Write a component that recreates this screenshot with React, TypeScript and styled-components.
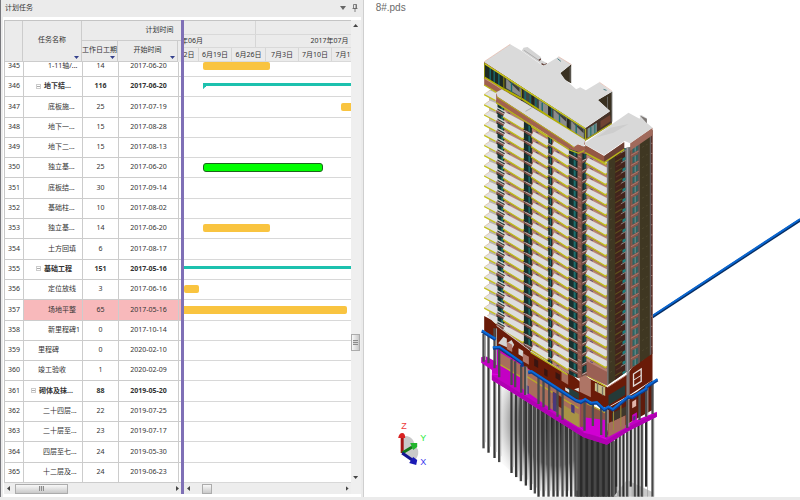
import React from "react";
import styled, { createGlobalStyle, css } from "styled-components";

const GlobalStyle = createGlobalStyle`
  * { box-sizing: border-box; }
  html, body, #root { height: 100%; margin: 0; }
  body { background: #ffffff; overflow: hidden; }
  button { font: inherit; padding: 0; margin: 0; border: 0; background: none; color: inherit; }
`;

/* ---------- data ---------- */

type Task = {
  id: number;
  name: string;
  indent: number;
  days: number;
  start: string;
  group?: boolean;
  active?: boolean;
  bar?: { kind: "task" | "summary" | "done"; from: number; length: number; open?: boolean };
};

const tasks: Task[] = [
  { id: 345, name: "1-11轴/...", indent: 24, days: 14, start: "2017-06-20", bar: { kind: "task", from: 19, length: 67 } },
  { id: 346, name: "地下结...", indent: 12, days: 116, start: "2017-06-20", group: true, bar: { kind: "summary", from: 19, length: 560, open: true } },
  { id: 347, name: "底板施...", indent: 24, days: 25, start: "2017-07-19", bar: { kind: "task", from: 157, length: 120 } },
  { id: 348, name: "地下一...", indent: 24, days: 15, start: "2017-08-28" },
  { id: 349, name: "地下二...", indent: 24, days: 15, start: "2017-08-13" },
  { id: 350, name: "独立基...", indent: 24, days: 25, start: "2017-06-20", bar: { kind: "done", from: 19, length: 120 } },
  { id: 351, name: "底板结...", indent: 24, days: 30, start: "2017-09-14" },
  { id: 352, name: "基础柱...", indent: 24, days: 10, start: "2017-08-02" },
  { id: 353, name: "独立基...", indent: 24, days: 14, start: "2017-06-20", bar: { kind: "task", from: 19, length: 67 } },
  { id: 354, name: "土方回填", indent: 24, days: 6, start: "2017-08-17" },
  { id: 355, name: "基础工程", indent: 12, days: 151, start: "2017-05-16", group: true, bar: { kind: "summary", from: -140, length: 720 } },
  { id: 356, name: "定位放线", indent: 24, days: 3, start: "2017-06-16", bar: { kind: "task", from: 0, length: 15 } },
  { id: 357, name: "场地平整", indent: 24, days: 65, start: "2017-05-16", active: true, bar: { kind: "task", from: -148, length: 311 } },
  { id: 358, name: "新里程碑1", indent: 24, days: 0, start: "2017-10-14" },
  { id: 359, name: "里程碑", indent: 14, days: 0, start: "2020-02-10" },
  { id: 360, name: "竣工验收", indent: 14, days: 1, start: "2020-02-09" },
  { id: 361, name: "砌体及抹...", indent: 7, days: 88, start: "2019-05-20", group: true },
  { id: 362, name: "二十四层...", indent: 19, days: 22, start: "2019-07-25" },
  { id: 363, name: "二十层至...", indent: 19, days: 23, start: "2019-07-17" },
  { id: 364, name: "四层至七...", indent: 19, days: 24, start: "2019-05-30" },
  { id: 365, name: "十二层及...", indent: 19, days: 24, start: "2019-06-23" },
];

const weeks = ["6月12日", "6月19日", "6月26日", "7月3日", "7月10日", "7月17日"];

/* ---------- shell ---------- */

const Page = styled.div`
  height: 100vh;
  display: grid;
  grid-template-columns: minmax(0, 5fr) minmax(0, 6fr);
  grid-template-rows: minmax(0, 1fr) 3px;
  font-family: "Noto Sans", "Noto Sans CJK SC", sans-serif;
  font-size: 7px;
  line-height: 10px;
  color: #333333;
`;

const StatusStrip = styled.footer`
  grid-column: 1 / -1;
  background: #ebebeb;
`;

const TaskPanel = styled.section`
  display: flex;
  flex-direction: column;
  min-height: 0;
  border-left: 1px solid #77777c;
  border-right: 1px solid #cfcfcf;
  background: #ebebeb;
`;

const TitleBar = styled.header`
  display: flex;
  align-items: center;
  gap: 6px;
  height: 17px;
  padding: 0 5px 2px 4px;
`;

const PanelTitle = styled.h1`
  flex: 1;
  margin: 0;
  font-size: 7px;
  font-weight: 400;
`;

const IconButton = styled.button`
  display: flex;
  width: 6px;
  height: 8px;
  align-items: center;
  justify-content: center;
  color: #666666;
`;

const PanelBody = styled.div`
  flex: 1;
  min-height: 0;
  display: flex;
  margin: 0 2px;
  padding: 3px 0 3px 1px;
  background: #ffffff;
`;

const Pane = styled.div<{ $grow?: boolean }>`
  display: flex;
  flex-direction: column;
  min-height: 0;
  min-width: 0;
  overflow: hidden;
  ${(p) => (p.$grow ? css`flex: 1;` : css`flex: none; width: 177px;`)}
`;

const Splitter = styled.div`
  flex: none;
  width: 3px;
  background: #7f70b6;
`;

/* ---------- task table ---------- */

const columns = "19px 59px 36px 60px 3px";
const rowTracks = `15px repeat(${tasks.length - 1}, minmax(0, 1fr))`;

const Table = styled.table`
  flex: 1;
  min-height: 0;
  display: flex;
  flex-direction: column;
`;

const Head = styled.thead`
  display: block;
  height: 42px;
  flex: none;
  border-top: 1px solid #c4c4c4;
  border-left: 1px solid #c4c4c4;
  background: #ebebeb;
`;

const HeadRow = styled.tr`
  display: grid;
  height: 41px;
  grid-template-columns: 18px 59px 36px 60px 60px;
  grid-template-rows: 20px 21px;
`;

const HeadCell = styled.th<{ $area: string }>`
  grid-area: ${(p) => p.$area};
  display: flex;
  align-items: center;
  justify-content: center;
  position: relative;
  padding: 0 0 2px;
  border-right: 1px solid #cccccc;
  border-bottom: 1px solid #cccccc;
  font-weight: 400;
  white-space: nowrap;
`;

const FilterMark = styled.button`
  position: absolute;
  right: 2px;
  bottom: 2px;
  width: 5px;
  height: 3px;
  background: #34418c;
  clip-path: polygon(0 0, 100% 0, 50% 100%);
`;

const Body = styled.tbody`
  flex: 1;
  min-height: 0;
  display: grid;
  grid-template-rows: ${rowTracks};
`;

const Row = styled.tr<{ $group?: boolean }>`
  display: grid;
  grid-template-columns: ${columns};
  grid-template-rows: minmax(0, 1fr);
  min-height: 0;
  overflow: hidden;
  border-left: 1px solid #c8c8c8;
  border-bottom: 1px solid #cccccc;
  font-weight: ${(p) => (p.$group ? 700 : 400)};
  align-items: end;
`;

const Cell = styled.td<{ $active?: boolean; $left?: number }>`
  display: flex;
  align-items: center;
  justify-content: ${(p) => (p.$left === undefined ? "center" : "flex-start")};
  padding: 0 0 0 ${(p) => p.$left ?? 0}px;
  height: 100%;
  min-height: 20px;
  min-width: 0;
  white-space: nowrap;
  border-right: 1px solid #cccccc;
  background: ${(p) => (p.$active ? "#f8b9bb" : "#ffffff")};
`;

const NumberCell = styled(Cell).attrs({ as: "th" })`
  font-weight: 400;
`;

const Toggle = styled.button`
  flex: none;
  width: 5px;
  height: 5px;
  margin-right: 3px;
  border: 1px solid #cccccc;
  background: linear-gradient(#aaaaaa, #aaaaaa) center / 3px 1px no-repeat #ffffff;
`;

/* ---------- chart ---------- */

const ChartHead = styled.div`
  flex: none;
  height: 42px;
  display: grid;
  grid-template-rows: 14px 13px 14px;
  border-top: 1px solid #c4c4c4;
  background: #ebebeb;
  overflow: hidden;
`;

const Tier = styled.div<{ $tracks: string; $shift: number }>`
  display: grid;
  grid-template-columns: ${(p) => p.$tracks};
  margin-left: ${(p) => p.$shift}px;
  border-bottom: 1px solid #d9d9d9;
`;

const TierCell = styled.div`
  display: flex;
  align-items: center;
  justify-content: center;
  white-space: nowrap;
  border-right: 1px solid #d6d6d6;
`;

const ChartBody = styled.div`
  flex: 1;
  min-height: 0;
  display: grid;
  grid-template-rows: ${rowTracks};
`;

const Lane = styled.div`
  display: flex;
  align-items: flex-end;
  min-height: 0;
  overflow: hidden;
  border-bottom: 1px solid #d8d8d8;
`;

const Track = styled.div`
  display: flex;
  align-items: center;
  height: 100%;
  min-height: 20px;
`;

const Bar = styled.div<{ $kind: "task" | "summary" | "done"; $from: number; $length: number }>`
  flex: none;
  margin-left: ${(p) => p.$from}px;
  width: ${(p) => p.$length}px;
  ${(p) =>
    p.$kind === "summary"
      ? css`height: 3px; margin-bottom: 3px; background: #1dc1ae;`
      : p.$kind === "done"
      ? css`height: 9px; border: 1px solid #1c651c; border-radius: 3px; background: #00ff00;`
      : css`height: 8px; border-radius: 2px; background: #f9c440;`}
`;

const StartNotch = styled.div`
  width: 3px;
  height: 6px;
  background: #1dc1ae;
  clip-path: polygon(0 0, 100% 0, 100% 50%, 0 100%);
`;

/* ---------- scroll bars ---------- */

const ScrollRow = styled.div`
  flex: none;
  display: flex;
  align-items: center;
  height: 11px;
  padding: 0 2px 0 3px;
  background: #ededed;
`;

const ScrollColumn = styled.div`
  flex: none;
  display: flex;
  flex-direction: column;
  align-items: center;
  width: 10px;
  padding: 4px 0 15px;
  background: #efefef;
`;

const Space = styled.div<{ $grow: number }>`
  flex: ${(p) => p.$grow} 1 0;
`;

const Thumb = styled.div<{ $w: number; $h: number; $vertical?: boolean }>`
  flex: none;
  display: flex;
  align-items: center;
  justify-content: center;
  width: ${(p) => p.$w}px;
  height: ${(p) => p.$h}px;
  border: 1px solid #acacac;
  background: linear-gradient(${(p) => (p.$vertical ? "90deg" : "180deg")}, #f8f8f8, #c9c9c9);
`;

const Grip = styled.span<{ $vertical?: boolean }>`
  width: 5px;
  height: 5px;
  background: repeating-linear-gradient(
    ${(p) => (p.$vertical ? "180deg" : "90deg")}, #8c8c8c 0 1px, #d5d5d5 1px 2px);
`;

const arrows = {
  left: "polygon(100% 0, 100% 100%, 0 50%)",
  right: "polygon(0 0, 100% 50%, 0 100%)",
  up: "polygon(0 100%, 50% 0, 100% 100%)",
  down: "polygon(0 0, 100% 0, 50% 100%)",
};

const Arrow = styled.button<{ $dir: keyof typeof arrows }>`
  flex: none;
  width: ${(p) => (p.$dir === "left" || p.$dir === "right" ? 3 : 5)}px;
  height: ${(p) => (p.$dir === "left" || p.$dir === "right" ? 5 : 3)}px;
  background: #444444;
  clip-path: ${(p) => arrows[p.$dir]};
`;

/* ---------- model view ---------- */

const ModelPanel = styled.section`
  display: flex;
  flex-direction: column;
  min-width: 0;
  min-height: 0;
  background: #ffffff;
`;

const FileName = styled.h2`
  flex: none;
  height: 16px;
  margin: 0;
  padding: 0 12px;
  font: 400 10px/15px "Liberation Sans", sans-serif;
  color: #6a6a6a;
`;

const Scene = styled.svg`
  flex: 1;
  min-height: 0;
  width: 100%;
  display: block;
`;

const PITCH = 30.5;
const floors = Array.from({ length: 32 }, (_, i) => i - 13);

type Bay = { x: number; w: number; y: number; slope: number };
const bays: Bay[] = [
  { x: 98, w: 63, y: 480, slope: 0.52 },
  { x: 183, w: 51, y: 472, slope: 0.54 },
  { x: 245, w: 51, y: 470, slope: 0.54 },
  { x: 346, w: 64, y: 464, slope: 0.5 },
];

function Slab({ x, w, y, slope }: Bay) {
  const top = y - w * slope;
  return (
    <g>
      <path d={`M${x + 3} ${top + 3}L${x + w} ${y + 3}v9L${x + 3} ${top + 12}z`} fill="#b98377" />
      <path d={`M${x + 14} ${top + 12}l8 4v3l-8 -4z`} fill="#544a76" />
      <path d={`M${x} ${top - 4}L${x + 7} ${top - 18}L${x + w} ${y - 21}V${y - 3}L${x + w - 4} ${y}z`} fill="#dedede" />
      <path d={`M${x} ${top - 3}L${x + w - 4} ${y}L${x + w} ${y - 4}`} fill="none" stroke="#c2be20" strokeWidth="4" />
      <path d={`M${x + 2} ${top + 1}L${x + w - 4} ${y + 4}`} stroke="#8a841f" strokeWidth="1" />
    </g>
  );
}

function WindowStrip({ x, w, y, dir = 1 }: { x: number; w: number; y: number; dir?: number }) {
  const d = w * 0.55 * dir;
  return (
    <g>
      <path d={`M${x} ${y}l${w} ${d}v21l${-w} ${-d}z`} fill="#16302f" />
      <path d={`M${x + w * 0.55} ${y + d * 0.55 + 2}l${w * 0.22} ${d * 0.22}v17l${-w * 0.22} ${-d * 0.22}z`} fill="#1f6d6c" />
      <path d={`M${x} ${y + 24}l${w} ${d}`} stroke="#b2b2b2" strokeWidth="3" />
      <path d={`M${x} ${y + 28}l${w} ${d}`} stroke="#7a4a40" strokeWidth="4" />
    </g>
  );
}

function Tower() {
  return (
    <g>
      <clipPath id="front">
        <path d="M38 180L60 178L78 190V198L300 350H345L400 392L413 388V1068L345 1035L325 1045L290 1030L180 960L80 885L38 845z" />
      </clipPath>
      <clipPath id="side">
        <path d="M410 392L462 355L480 352L548 300V970L412 1066z" />
      </clipPath>

      <g clipPath="url(#front)">
        <path d="M58 180H413V1070H58z" fill="#9a6054" />
        <path d="M160 250h8v800h-8zM230 280h6v800h-6z" fill="#30211d" />
        <path d="M58 180h20v700h-20z" fill="#b9b5b0" />
        {floors.map((k) => (
          <g key={k} transform={`translate(0 ${k * PITCH})`}>
            <WindowStrip x={80} w={24} y={430} />
            <WindowStrip x={162} w={23} y={460} />
            <WindowStrip x={231} w={15} y={468} />
            <WindowStrip x={295} w={28} y={470} />
            <path d="M322 486l14 7v24l-14 -7z" fill="#8b5549" />
            <path d="M324 500l10 5" stroke="#b08378" strokeWidth="3" />
            <WindowStrip x={336} w={13} y={492} dir={-1} />
          </g>
        ))}
        <path d="M107 200v690M190 260v720M250 290v760" stroke="#b98778" strokeWidth="2" />
        <path d="M335 350v700" stroke="#5c4540" strokeWidth="2" />
        {floors.map((k) => (
          <g key={k}>
            {bays.map((b) => (
              <Slab key={b.x} {...b} y={b.y + k * PITCH} />
            ))}
            <g transform={`translate(0 ${k * PITCH})`}>
              <path d="M42 438L58 425L82 435V452L76 456z" fill="#e2e2e2" />
              <path d="M42 437L46 434L58 426" fill="none" stroke="#d9b98e" strokeWidth="2" />
              <path d="M42 438L76 456" stroke="#c4c022" strokeWidth="4" />
              <path d="M80 446l26 14" stroke="#d0d0d0" strokeWidth="4" />
            </g>
          </g>
        ))}
      </g>

      <g clipPath="url(#side)">
        <path d="M410 290H548V1070H410z" fill="#3f3722" />
        <path d="M410 290h5v780h-5z" fill="#7c7c80" />
        <path d="M435 300h30v760h-30z" fill="#42241c" />
        <path d="M465 290h14v760h-14z" fill="#77777b" />
        <path d="M470 290h3v760h-3z" fill="#a9a9ae" />
        <path d="M480 290h29v760h-29z" fill="#86564a" />
        <path d="M504 290h4v760h-4z" fill="#55575a" />
        <path d="M539 290h3v760h-3z" fill="#6d6d70" />
        <path d="M542 290h6v760h-6z" fill="#5a342e" />
        <path d="M547 290v760" stroke="#c08f86" strokeWidth="2" />
        {floors.map((k) => (
          <g key={k} transform={`translate(0 ${k * PITCH})`}>
            <path d="M435 486l20 -12v4l-20 12z" fill="#5e501c" />
            <path d="M457 477l9 -5v9l-9 5z" fill="#1d7f7e" />
            <path d="M452 491l14 -8" stroke="#b4b4b4" strokeWidth="2" />
            <path d="M437 500l16 -9v4l-16 9z" fill="#5a3527" />
            <path d="M487 473l16 -9v19l-16 9z" fill="#2d6463" />
            <path d="M495 468v19" stroke="#9ba7a7" strokeWidth="2" />
            <path d="M482 498l24 -13" stroke="#bd8a7e" strokeWidth="2" />
            <path d="M420 478l5 -3M516 474l5 -3M528 467l4 -2" stroke="#756d4d" strokeWidth="1" />
            <path d="M543 462h4" stroke="#c9a49d" strokeWidth="2" />
          </g>
        ))}
      </g>
    </g>
  );
}

function Roof() {
  return (
    <g>
      <path d="M42 95V165L78 187L345 345V295z" fill="#a0614f" />
      <path d="M42 98L345 292V330L42 143z" fill="#3f4643" />
      <path d="M42 100L98 136V178L42 143z" fill="#1d2a24" />
      <path d="M108 147l46 30v25l-46 -28zM206 210l28 18v32l-28 -18zM250 240l40 26v28l-40 -24zM303 274l38 24v28l-38 -24z" fill="#8b8c8d" />
      <path d="M112 150l36 24v12zM254 243l34 22v10zM306 277l34 21v12z" fill="#3c3b39" />
      <path d="M60 114v38M72 122v38M86 132v37M124 158v34M165 184v34M180 194v34M197 206v34M216 218v34M243 234v34M268 254v30M318 284v30" stroke="#176c70" strokeWidth="4" />
      <path d="M102 140v42M156 176v36M188 196v36M238 228v38M294 268v34" stroke="#25251f" strokeWidth="8" />
      <path d="M42 100L345 296" stroke="#c8c51e" strokeWidth="5" />
      <path d="M42 142L98 176L156 207L345 331" fill="none" stroke="#b4b000" strokeWidth="6" />
      <path d="M43 98v45M101 140v38M154 178v32" stroke="#8c8b14" strokeWidth="3" />
      <path d="M44 146L78 167L92 177" fill="none" stroke="#c79182" strokeWidth="3" />
      <path d="M42 165L80 188" stroke="#b9b51a" strokeWidth="4" />

      <path d="M345 295L425 240V281L345 332z" fill="#473329" />
      <path d="M352 296l28 -18v28l-28 18z" fill="#789090" />
      <path d="M362 291v27M374 283v27" stroke="#1b6b6c" strokeWidth="3" />
      <path d="M391 273l30 -19v20l-30 20z" fill="#704232" />
      <path d="M346 296v34L425 281" fill="none" stroke="#aaa61b" strokeWidth="4" />
      <path d="M303 103V160L284 150L270 130zM425 185V280L418 243L383 210z" fill="#393021" />
      <path d="M300 110v45M412 200v37M425 185v90" stroke="#696764" strokeWidth="3" />
      <path d="M160 53L172 51L212 81V90L229 98L218 106L155 62z" fill="#d4d4d4" />
      <path d="M162 61L206 91L213 84" fill="none" stroke="#999999" strokeWidth="2" />
      <path d="M206 91l6 -4M214 101l8 5l8 -5" stroke="#603d35" strokeWidth="4" fill="none" />
      <path d="M42 95L120 43L155 63L218 107L228 103L265 80L303 103L270 128L284 148L318 178L330 172L347 181L387 157L425 185L383 210L420 243L345 293z" fill="#dadada" />
      <path d="M265 80L304 104M388 157L425 183M42 95L120 43" stroke="#e4b5a6" strokeWidth="2" />
      <path d="M262 86l10 8M400 178l9 3" stroke="#467b83" strokeWidth="3" />

      <path d="M78 190L300 335L345 350V372L300 358L78 218z" fill="#a1614f" />
      <path d="M78 187L95 178L170 222L345 330L340 350L325 342L310 352L296 340L82 200z" fill="#dadada" />
      <path d="M80 201L296 341L312 352" fill="none" stroke="#b5b11b" strokeWidth="3" />
      <path d="M78 218L298 360L325 370L342 362" fill="none" stroke="#b5b11b" strokeWidth="4" />
      <path d="M166 244L184 234" stroke="#9a9a9a" strokeWidth="2" />

      <path d="M345 345L402 378L462 337V358L402 398L345 368z" fill="#945845" />
      <path d="M402 378L462 337V358L402 398z" fill="#6c4034" />
      <path d="M480 340L547 293V316L480 362z" fill="#a06a5c" />
      <path d="M345 338L475 248L508 266L513 254L530 265V279L547 293L480 340L463 333L402 376L345 344z" fill="#d8d8d8" />
      <path d="M380 322L420 293L475 282L430 308z" fill="#cdcdcd" />
      <path d="M508 256l22 10v14z" fill="#7c7774" />
      <path d="M402 398L462 358" stroke="#b9b51a" strokeWidth="4" />
      <path d="M345 368L402 398" stroke="#b9b51a" strokeWidth="4" />
    </g>
  );
}

const frontPiles = [40, 55, 73, 87, 124, 138, 152, 167, 182, 194, 205, 220, 235, 250, 262, 277, 290, 303, 316];
const rearPiles = [325, 333, 341, 350, 358, 366, 375, 383, 391, 400, 408, 417, 428, 438, 449, 460, 471, 482, 494, 505, 515, 528, 547];

function Foundation() {
  return (
    <g transform="translate(0 810)">
      <defs>
        <radialGradient id="shade" cx="0.75" cy="0.35" r="0.7">
          <stop offset="0" stopColor="#222222" />
          <stop offset="0.55" stopColor="#5a5a5a" />
          <stop offset="1" stopColor="#eeeeee" stopOpacity="0" />
        </radialGradient>
      </defs>
      <path d="M60 240L330 400V590H215L140 530L40 440z" fill="url(#shade)" />
      <path d="M318 400H408L440 430V590H318z" fill="#3c3c3c" />
      <path d="M430 590L470 540L545 575V590z" fill="#c9c9c9" />
      {frontPiles.map((x, i) => {
        const end = x < 210 ? 445 + (x - 40) * 0.88 : 590;
        const top = 185 + (x - 40) * 0.68;
        return (
          <g key={x}>
            <path d={`M${x} ${top}V${end}`} stroke={i % 3 ? "#373737" : "#4b4b4b"} strokeWidth="7" />
            <path d={`M${x + 5} ${top}V${end - 18}`} stroke="#b5b5b5" strokeWidth="2" />
          </g>
        );
      })}
      {rearPiles.map((x, i) => (
        <g key={x}>
          <path d={`M${x} ${x > 410 ? 430 - (x - 410) * 0.6 : 390}V${i % 4 === 1 && x > 410 ? 560 : 590}`} stroke={i % 2 ? "#2b2b2b" : "#484848"} strokeWidth="7" />
          {x > 410 && <path d={`M${x + 4} ${430 - (x - 410) * 0.6}V590`} stroke="#999999" strokeWidth="2" />}
        </g>
      ))}

      <path d="M33 172L45 168L75 184V140L350 300L412 395L560 335V350L475 393L410 434L340 412L65 240V210L33 188z" fill="#c300c4" />
      <path d="M65 240L340 412L410 434L475 393L560 350V338L475 380L410 420L340 396L65 226z" fill="#b000b2" />
      <path d="M65 222L100 225L340 390L408 416" fill="none" stroke="#e400e6" strokeWidth="3" />
      <path d="M85 155L330 300V384L290 360L155 265V235L88 195z" fill="#a86e5c" />
      <path d="M88 193L155 233V268L88 228z" fill="#c300c4" />
      <path d="M88 193L155 233M170 230L325 325" stroke="#b9a72c" strokeWidth="4" />
      <path d="M248 275l30 18v34l-30 -18z" fill="#6f1e0c" />
      <path d="M280 315L326 343V382L280 354z" fill="#a89346" />
      <path d="M248 275l12 6v56l-12 -6zM303 312l10 5v24l-10 -5zM385 330l10 5v22l-10 -5zM168 255l8 4v24l-8 -4z" fill="#49387b" />
      <path d="M330 300L410 340V408L385 382L330 380z" fill="#8c5446" />
      <path d="M340 352L405 360V412L340 398z" fill="#d000d2" />
      <path d="M350 310L405 338" stroke="#b9a72c" strokeWidth="4" />
      <path d="M412 325L500 275L547 240V330L412 405z" fill="#5f1c0d" />
      <path d="M414 370L466 345V383L414 411z" fill="#a46d5d" />
      <path d="M425 340l50 -25v26l-50 24z" fill="#3f372d" />
      <path d="M486 305l12 -7v20l-12 7z" fill="#e0b5ab" />
      <path d="M486 345l14 -8v24l-14 8z" fill="#c300c4" />
      <path d="M489 350l7 -4v12l-7 4z" fill="#49387b" />
      <path d="M430 328v62M452 315v64" stroke="#9b8d3a" strokeWidth="3" />

      <path d="M42 48L80 68L180 140L300 220L330 245L345 230L412 262L470 225L512 165L547 150V240L478 285L408 325L345 298L318 300L80 145L78 118L42 92z" fill="#6a1b08" />
      <path d="M80 75L180 150" stroke="#d7cfca" strokeWidth="5" />
      <path d="M84 130l16 -20l10 6v14l14 -10l8 14l-8 14zM145 145l14 8v18l-14 -8z" fill="#d4d2d0" />
      <path d="M110 125l16 9v22l-16 -9zM158 160l18 10v24l-18 -10z" fill="#b2786a" />
      <path d="M192 175l12 7v22l-12 -7zM222 205l10 6v20l-10 -6zM256 216l14 8v18l-14 -8z" fill="#391510" />
      <path d="M274 210l20 12v32l-20 -12z" fill="#a86e5c" />
      <path d="M182 152L292 218" stroke="#d9d7d0" strokeWidth="9" />
      <path d="M182 157L292 224" stroke="#b9b51a" strokeWidth="4" />
      <path d="M292 262l34 18v18l-34 -18z" fill="#273e3c" />
      <path d="M285 262l12 7v9l-12 -7zM312 268l14 -5v12z" fill="#e2dfdc" />
      <path d="M328 232L345 224L362 240V292L328 275z" fill="#ae7566" />
      <path d="M350 226L408 260" stroke="#bdb91f" strokeWidth="4" />
      <path d="M374 248L405 262V288L374 272z" fill="#c9bf8a" />
      <path d="M382 250v26M397 260v26" stroke="#777164" strokeWidth="4" />
      <path d="M412 262L468 226" stroke="#b2776a" strokeWidth="3" />
      <path d="M415 286l50 -30v28l-50 32z" fill="#253a38" />
      <path d="M490 222L513 207V244L490 258z" fill="none" stroke="#e3dcd9" strokeWidth="4" />
      <path d="M491 240l22 -14" stroke="#e3dcd9" strokeWidth="3" />
      <path d="M471 200V300M476 200V300" stroke="#8a8a8d" strokeWidth="4" />

      <path d="M40 102V185M55 108V190M73 85V205M87 150V232M124 178V255M135 184V262M153 195V278M165 198V285M205 232V312M220 240V322M237 250V330M262 270V350M277 280V360M343 300V392M368 308V378M393 320V405M408 328V412M471 295V384M508 275V360M528 260V350M547 245V342" stroke="#4c4c4c" strokeWidth="7" />
      <path d="M46 102V180M79 85V195M170 200V285M414 330V370M476 297V380M533 260V345" stroke="#a3a3a3" strokeWidth="3" />
      <path d="M35 94L76 119M68 145L88 143L156 190V200M174 218L184 216L270 272L318 303L332 308L345 300L362 311L380 309L402 330L415 322L428 330L474 292L486 293L528 268V262L562 240" fill="none" stroke="#0a3f91" strokeWidth="9" />
      <path d="M35 91L76 116M68 142L88 140L156 188M174 215L184 213L270 269L318 300L332 305L345 297L362 308L380 306L402 327L415 319L428 327L474 289L486 290L528 265V259L562 237" fill="none" stroke="#0a6ad8" strokeWidth="6" />
    </g>
  );
}

function AxisMark() {
  return (
    <g>
      <path d="M402 437a8 8 0 0 1 10 2q3 4 2 7q5 2 4 8q-1 5 -5 7L402 453z" fill="#c9c9c9" />
      <path d="M402 453V438" stroke="#a31515" strokeWidth="3" />
      <path d="M398 438Q399 433 402 433Q405 433 405 438z" fill="#d92222" />
      <path d="M402 453L412 447" stroke="#137a1b" strokeWidth="3" />
      <path d="M410 443L417 443L417 447L413 450z" fill="#22b52d" />
      <path d="M402 453L412 460" stroke="#131392" strokeWidth="3" />
      <path d="M413 457L417 460L416 465L409 463z" fill="#1a1ab5" />
      <g fontFamily="Liberation Sans, sans-serif" fontSize="9">
        <text x="401" y="429" fill="#ee3a3a">Z</text>
        <text x="420" y="441" fill="#2bea3a">Y</text>
        <text x="420" y="465" fill="#3838ee">X</text>
      </g>
    </g>
  );
}

/* ---------- composition ---------- */

function TaskTable() {
  return (
    <Table cellSpacing={0}>
      <Head>
        <HeadRow>
          <HeadCell $area="1 / 1 / 3 / 2" aria-label="No." />
          <HeadCell $area="1 / 2 / 3 / 3">任务名称<FilterMark aria-label="Filter name" /></HeadCell>
          <HeadCell $area="1 / 3 / 2 / 6">计划时间</HeadCell>
          <HeadCell $area="2 / 3 / 3 / 4">工作日工期<FilterMark aria-label="Filter duration" /></HeadCell>
          <HeadCell $area="2 / 4 / 3 / 5">开始时间<FilterMark aria-label="Filter start" /></HeadCell>
        </HeadRow>
      </Head>
      <Body>
        {tasks.map((t) => (
          <Row key={t.id} $group={t.group}>
            <NumberCell scope="row">{t.id}</NumberCell>
            <Cell $left={t.indent} $active={t.active}>
              {t.group && <Toggle aria-label="Collapse" />}
              {t.name}
            </Cell>
            <Cell $active={t.active}>{t.days}</Cell>
            <Cell $active={t.active}>{t.start}</Cell>
            <Cell $active={t.active} />
          </Row>
        ))}
      </Body>
    </Table>
  );
}

function Chart() {
  return (
    <>
      <ChartHead>
        <Tier $tracks="143px 148px" $shift={-71}>
          <TierCell />
          <TierCell />
        </Tier>
        <Tier $tracks="143px 148px" $shift={-71}>
          <TierCell>2017年06月</TierCell>
          <TierCell>2017年07月</TierCell>
        </Tier>
        <Tier $tracks="34px 33px 34px 33px 33px 34px" $shift={-19}>
          {weeks.map((w) => (
            <TierCell key={w}>{w}</TierCell>
          ))}
        </Tier>
      </ChartHead>
      <ChartBody>
        {tasks.map((t) => (
          <Lane key={t.id}>
            <Track>
              {t.bar && (
                <Bar $kind={t.bar.kind} $from={t.bar.from} $length={t.bar.length}>
                  {t.bar.open && <StartNotch />}
                </Bar>
              )}
            </Track>
          </Lane>
        ))}
      </ChartBody>
    </>
  );
}

export default function App() {
  return (
    <>
      <GlobalStyle />
      <Page>
        <TaskPanel>
          <TitleBar>
            <PanelTitle>计划任务</PanelTitle>
            <IconButton aria-label="Panel menu">
              <svg width="6" height="4" viewBox="0 0 6 4"><path d="M0 0h6L3 4z" fill="currentColor" /></svg>
            </IconButton>
            <IconButton aria-label="Pin panel">
              <svg width="6" height="8" viewBox="0 0 6 8">
                <path d="M1.500 .5h3v4h-3zM.5 4.500h5M3 4.500V8M4 .5v4" fill="none" stroke="currentColor" strokeWidth=".8" />
              </svg>
            </IconButton>
          </TitleBar>
          <PanelBody>
            <Pane>
              <TaskTable />
              <ScrollRow>
                <Arrow $dir="left" aria-label="Scroll table left" />
                <Space $grow={5} />
                <Thumb $w={53} $h={10}><Grip /></Thumb>
                <Space $grow={108} />
                <Arrow $dir="right" aria-label="Scroll table right" />
              </ScrollRow>
            </Pane>
            <Splitter role="separator" />
            <Pane $grow>
              <Chart />
              <ScrollRow>
                <Arrow $dir="left" aria-label="Scroll chart left" />
                <Space $grow={12} />
                <Thumb $w={10} $h={10} />
                <Space $grow={134} />
                <Arrow $dir="right" aria-label="Scroll chart right" />
              </ScrollRow>
            </Pane>
            <ScrollColumn>
              <Arrow $dir="up" aria-label="Scroll up" />
              <Space $grow={306} />
              <Thumb $w={9} $h={17} $vertical><Grip $vertical /></Thumb>
              <Space $grow={124} />
              <Arrow $dir="down" aria-label="Scroll down" />
            </ScrollColumn>
          </PanelBody>
        </TaskPanel>
        <ModelPanel>
          <FileName>8#.pds</FileName>
          <Scene viewBox="364 16 436 481" role="img" aria-label="Building model">
            <path d="M652 317L800 220" stroke="#062d63" strokeWidth="3" />
            <path d="M652 316L800 219" stroke="#0a66d0" strokeWidth="2" />
            <g transform="translate(470 30) scale(.33333)">
              <Foundation />
              <Tower />
              <Roof />
            </g>
            <AxisMark />
          </Scene>
        </ModelPanel>
        <StatusStrip />
      </Page>
    </>
  );
}
